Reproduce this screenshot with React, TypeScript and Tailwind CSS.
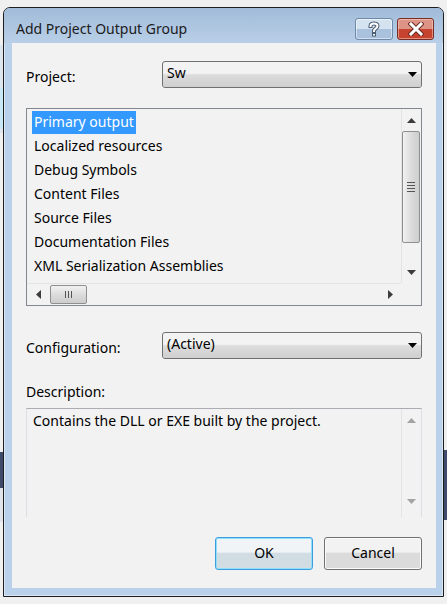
import React from "react";

const items = [
  "Primary output",
  "Localized resources",
  "Debug Symbols",
  "Content Files",
  "Source Files",
  "Documentation Files",
  "XML Serialization Assemblies",
];

function Tri({ dir, color }: { dir: "up" | "down" | "left" | "right"; color: string }) {
  const pts = {
    up: "0,5 9,5 4.5,0",
    down: "0,0 9,0 4.5,5",
    left: "5,0 5,9 0,4.5",
    right: "0,0 0,9 5,4.5",
  }[dir];
  const vert = dir === "up" || dir === "down";
  return (
    <svg width={vert ? 9 : 5} height={vert ? 5 : 9} viewBox={vert ? "0 0 9 5" : "0 0 5 9"}>
      <polygon points={pts} fill={color} />
    </svg>
  );
}

function Combo({ value }: { value: string }) {
  return (
    <div className="relative w-[260px] h-[27px] rounded-[3px] border border-[#707070] bg-gradient-to-b from-[#f3f3f3] from-45% to-[#d0d0d0] to-55% overflow-hidden">
      <div className="absolute inset-x-0 bottom-0 h-[50%] bg-gradient-to-b from-[#dcdcdc] to-[#cfcfcf]" />
      <div className="relative flex items-center justify-between h-full pl-[4px] pr-[4px]">
        <span className="text-[#000] leading-none -mt-[3px]">{value}</span>
        <Tri dir="down" color="#000" />
      </div>
    </div>
  );
}

function HelpIcon() {
  return (
    <svg width="14" height="16" viewBox="0 0 14 16">
      <path
        d="M3.5 5 C3.5 1.5 10.5 1.5 10.5 5 C10.5 7.5 7 7.5 7 10"
        fill="none"
        stroke="#4b5d73"
        strokeWidth="4"
        strokeLinecap="square"
      />
      <rect x="5" y="12" width="4" height="3.5" fill="#4b5d73" />
      <path
        d="M3.5 5 C3.5 1.5 10.5 1.5 10.5 5 C10.5 7.5 7 7.5 7 10"
        fill="none"
        stroke="#fff"
        strokeWidth="2"
        strokeLinecap="square"
      />
      <rect x="6" y="13" width="2" height="1.5" fill="#fff" />
    </svg>
  );
}

function CloseIcon() {
  return (
    <svg width="16" height="14" viewBox="0 0 16 14">
      <path d="M3 2 L13 12 M13 2 L3 12" stroke="#6b2a22" strokeWidth="5" strokeLinecap="square" />
      <path d="M3 2 L13 12 M13 2 L3 12" stroke="#fff" strokeWidth="3" strokeLinecap="square" />
    </svg>
  );
}

export default function App() {
  return (
    <div className="relative w-[447px] h-[604px] bg-[#f0f0f0] overflow-hidden font-['Noto_Sans',sans-serif] text-[14px] text-black">
      {/* desktop bits peeking behind the dialog */}
      <div className="absolute left-0 top-[45px] w-[3px] h-[88px] bg-[#dde6ee]" />
      <div className="absolute left-0 top-[88px] w-[3px] h-[40px] bg-[#c9e9f4]" />
      <div className="absolute left-0 top-[452px] w-[3px] h-[70px] bg-[#dfe3ea]" />
      <div className="absolute left-0 top-[452px] w-[3px] h-[36px] bg-[#3d4a69]" />
      <div className="absolute right-0 top-[450px] w-[3px] h-[70px] bg-[#3f4c6c]" />

      <div className="ml-[3px] mt-[7px] w-[441px] h-[590px] flex flex-col border border-[#1e1e1e] rounded-t-[7px] bg-[#b9d1ea] shadow-[inset_0_0_0_1px_#d9e6f4] overflow-hidden">
        {/* title bar */}
        <div className="h-[35px] shrink-0 flex items-start bg-gradient-to-b from-[#a1bbd8] to-[#b9cfe8] pl-[12px] pr-[9px]">
          <span className="mt-[14px] leading-none text-[14px] text-[#1b1b1b]">Add Project Output Group</span>
          <div className="ml-auto mt-[10px] flex gap-[4px]">
            <div className="w-[38px] h-[22px] rounded-[3px] border border-[#6f8aa8] bg-gradient-to-b from-[#d5e3f1] from-50% to-[#a9c1dc] to-50% shadow-[inset_0_0_0_1px_rgba(255,255,255,0.5)] flex items-center justify-center">
              <HelpIcon />
            </div>
            <div className="w-[37px] h-[22px] rounded-[3px] border border-[#7a2d23] bg-gradient-to-b from-[#dd9486] from-50% to-[#c5432f] to-50% shadow-[inset_0_0_0_1px_rgba(255,220,210,0.5)] flex items-center justify-center">
              <CloseIcon />
            </div>
          </div>
        </div>

        {/* client area */}
        <div className="ml-[8px] mr-[7px] w-[424px] h-[545px] shrink-0 bg-[#f2f2f2] px-[14px] pt-[18px] flex flex-col">
          <div className="h-[27px] flex items-center justify-between">
            <span className="leading-none mt-[4px]">Project:</span>
            <Combo value="Sw" />
          </div>

          {/* list box */}
          <div className="mt-[20px] w-[396px] h-[198px] border border-[#828790] grid grid-cols-[374px_20px] grid-rows-[174px_22px] bg-[#f2f2f2]">
            <div className="overflow-hidden pt-[1px] pl-[5px]">
              {items.map((it, i) => (
                <div key={it} className="h-[24px] flex items-center">
                  <span
                    className={
                      i === 0
                        ? "bg-[#3399ff] text-white h-[23px] flex items-center px-[2px] leading-none"
                        : "h-[23px] flex items-center px-[2px] leading-none"
                    }
                  >
                    {it}
                  </span>
                </div>
              ))}
            </div>
            <div className="border-l border-[#e3e3e3] flex flex-col items-center">
              <div className="h-[22px] flex items-center justify-center">
                <Tri dir="up" color="#3c3c3c" />
              </div>
              <div className="w-[18px] h-[112px] -ml-[1px] rounded-[2px] border border-[#8e8f8f] bg-gradient-to-r from-[#f2f2f2] via-[#dcdcdc] to-[#cdcdcd] flex flex-col items-center justify-center gap-[2px]">
                <div className="w-[8px] h-[1px] bg-[#555]" />
                <div className="w-[8px] h-[1px] bg-[#555]" />
                <div className="w-[8px] h-[1px] bg-[#555]" />
                <div className="w-[8px] h-[1px] bg-[#555]" />
              </div>
              <div className="mt-auto h-[22px] flex items-center justify-center">
                <Tri dir="down" color="#3c3c3c" />
              </div>
            </div>
            <div className="border-t border-[#e3e3e3] flex items-center">
              <div className="w-[22px] flex justify-center">
                <Tri dir="left" color="#3c3c3c" />
              </div>
              <div className="w-[37px] h-[19px] ml-[1px] rounded-[2px] border border-[#8e8f8f] bg-gradient-to-b from-[#f2f2f2] via-[#dcdcdc] to-[#cdcdcd] flex items-center justify-center gap-[2px]">
                <div className="w-[1px] h-[7px] bg-[#555]" />
                <div className="w-[1px] h-[7px] bg-[#555]" />
                <div className="w-[1px] h-[7px] bg-[#555]" />
              </div>
              <div className="ml-auto w-[22px] flex justify-center">
                <Tri dir="right" color="#3c3c3c" />
              </div>
            </div>
            <div className="bg-[#f2f2f2]" />
          </div>

          <div className="mt-[26px] h-[27px] flex items-center justify-between">
            <span className="leading-none mt-[5px]">Configuration:</span>
            <Combo value="(Active)" />
          </div>

          <div className="mt-[23px] h-[20px] flex items-center leading-none">Description:</div>

          {/* description box */}
          <div className="mt-[6px] w-[396px] h-[109px] border-t border-x border-t-[#abadb3] border-x-[#dcdfe4] flex">
            <div className="flex-1 pl-[6px] pt-[2px] leading-[20px]">Contains the DLL or EXE built by the project.</div>
            <div className="w-[20px] border-l border-[#e3e3e3] flex flex-col items-center">
              <div className="h-[22px] flex items-center justify-center">
                <Tri dir="up" color="#a3a3a3" />
              </div>
              <div className="mt-auto h-[22px] mb-[5px] flex items-center justify-center">
                <Tri dir="down" color="#a3a3a3" />
              </div>
            </div>
          </div>

          <div className="mt-[20px] flex justify-end gap-[11px]">
            <div className="w-[98px] h-[33px] rounded-[3px] border border-[#3c9ee0] shadow-[inset_0_0_0_1px_#8fe0f8] bg-gradient-to-b from-[#f0f4f6] from-45% to-[#d2dde3] to-50% flex items-center justify-center">
              <span className="leading-none -mt-[1px]">OK</span>
            </div>
            <div className="w-[98px] h-[33px] rounded-[3px] border border-[#707070] shadow-[inset_0_0_0_1px_#fbfbfb] bg-gradient-to-b from-[#f2f2f2] from-45% to-[#dbdbdb] to-50% flex items-center justify-center">
              <span className="leading-none -mt-[1px]">Cancel</span>
            </div>
          </div>
        </div>
      </div>
    </div>
  );
}
